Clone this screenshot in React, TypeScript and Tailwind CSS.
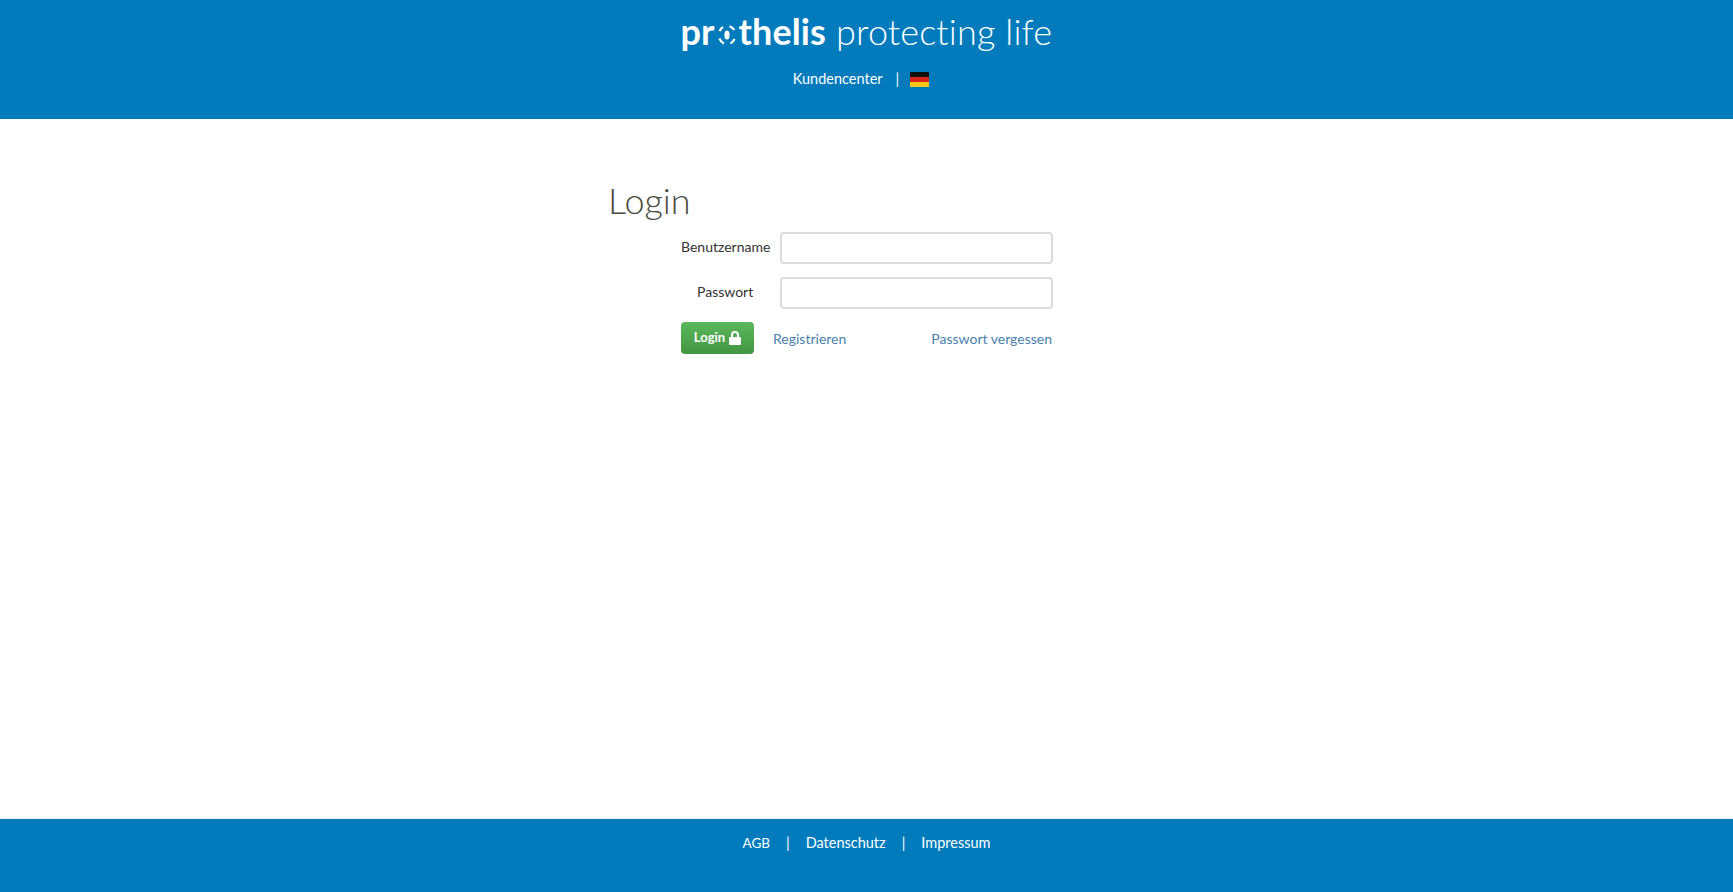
import React from 'react';

const font = "font-['Lato','Open_Sans',sans-serif]";

const LogoRing: React.FC = () => (
  <svg width="18" height="20" viewBox="0 0 18 20" className="mx-[3px] mt-[14px] shrink-0" fill="none">
    <ellipse cx="9" cy="10" rx="2.6" ry="4.6" fill="white" />
    <path d="M1.6 6.2A9 9 0 0 1 5 2" stroke="white" strokeWidth="2.2" />
    <path d="M11.5 1.4A9 9 0 0 1 16.4 5" stroke="white" strokeWidth="2.2" />
    <path d="M1.4 13.5A9 9 0 0 0 6 18.4" stroke="white" strokeWidth="2.2" />
    <path d="M12.5 18.4A9 9 0 0 0 16.6 14" stroke="white" strokeWidth="2.2" />
  </svg>
);

const LockIcon: React.FC = () => (
  <svg width="12" height="14" viewBox="0 0 12 14" fill="white">
    <path d="M2 6V4a4 4 0 0 1 8 0v2h1a1 1 0 0 1 1 1v6a1 1 0 0 1-1 1H1a1 1 0 0 1-1-1V7a1 1 0 0 1 1-1h1zm2 0h4V4a2 2 0 0 0-4 0v2z" />
  </svg>
);

const Flag: React.FC = () => (
  <span className="flex flex-col w-[19px] h-[15px] overflow-hidden">
    <span className="flex-1 bg-[#111111]" />
    <span className="flex-1 bg-[#d8261c]" />
    <span className="flex-1 bg-[#f5c518]" />
  </span>
);

const Field: React.FC<{ label: string; type?: string; center?: boolean }> = ({ label, type = 'text', center }) => (
  <div className="flex items-center h-[32px]">
    <label className={`w-[99px] pr-[9px] pb-[3px] text-[14px] text-[#333333] whitespace-nowrap ${center ? 'pl-[16px]' : ''}`}>
      {label}
    </label>
    <input
      type={type}
      className="w-[273px] h-[32px] bg-white border-2 border-[#dcdcdc] rounded-[4px]"
    />
  </div>
);

export default function App() {
  return (
    <div className={`h-[892px] flex flex-col bg-white ${font}`}>
      <header className="h-[119px] shrink-0 bg-[#027bbd] flex flex-col items-center text-white">
        <div className="flex items-start h-[52px] pt-[11px] w-[372px] leading-[40px] whitespace-nowrap">
          <span className="text-[36px] font-bold tracking-[0.1px]">pr</span>
          <LogoRing />
          <span className="text-[36px] font-bold tracking-[0.1px]">thelis</span>
          <span className="text-[36px] font-light ml-[10px] tracking-[0.15px]">protecting life</span>
        </div>
        <div className="flex items-center mt-[17px] ml-[-11px] text-[14.5px] h-[20px]">
          <a className="text-white">Kundencenter</a>
          <span className="ml-[13px] mr-[11px]">|</span>
          <Flag />
        </div>
      </header>

      <main className="flex-1 flex flex-col items-center">
        <div className="w-[515px] pt-[61px]">
          <h1 className="text-[36px] font-light leading-[40px] text-[#4a4a40] ml-[-1px]">Login</h1>
          <div className="ml-[72px] w-[372px] mt-[12px] flex flex-col gap-[13px]">
            <Field label="Benutzername" />
            <Field label="Passwort" type="password" center />
            <div className="flex items-center h-[32px] text-[14px]">
              <button className="w-[73px] h-[32px] flex items-center justify-center gap-[4px] rounded-[4px] text-white text-[13px] font-bold bg-gradient-to-b from-[#5cb85c] to-[#419641]">
                Login
                <LockIcon />
              </button>
              <a className="ml-[19px] text-[#4a7fae]">Registrieren</a>
              <a className="ml-auto mr-[1px] text-[#4a7fae]">Passwort vergessen</a>
            </div>
          </div>
        </div>
      </main>

      <footer className="h-[74px] shrink-0 bg-[#027bbd] border-t border-[#e6f2f8] text-white text-[14.5px] flex justify-center pt-[13px]">
        <div className="flex items-start h-[20px] gap-[16px]">
          <a className="text-[13.5px] leading-[22px]">AGB</a>
          <span>|</span>
          <a>Datenschutz</a>
          <span>|</span>
          <a>Impressum</a>
        </div>
      </footer>
    </div>
  );
}
